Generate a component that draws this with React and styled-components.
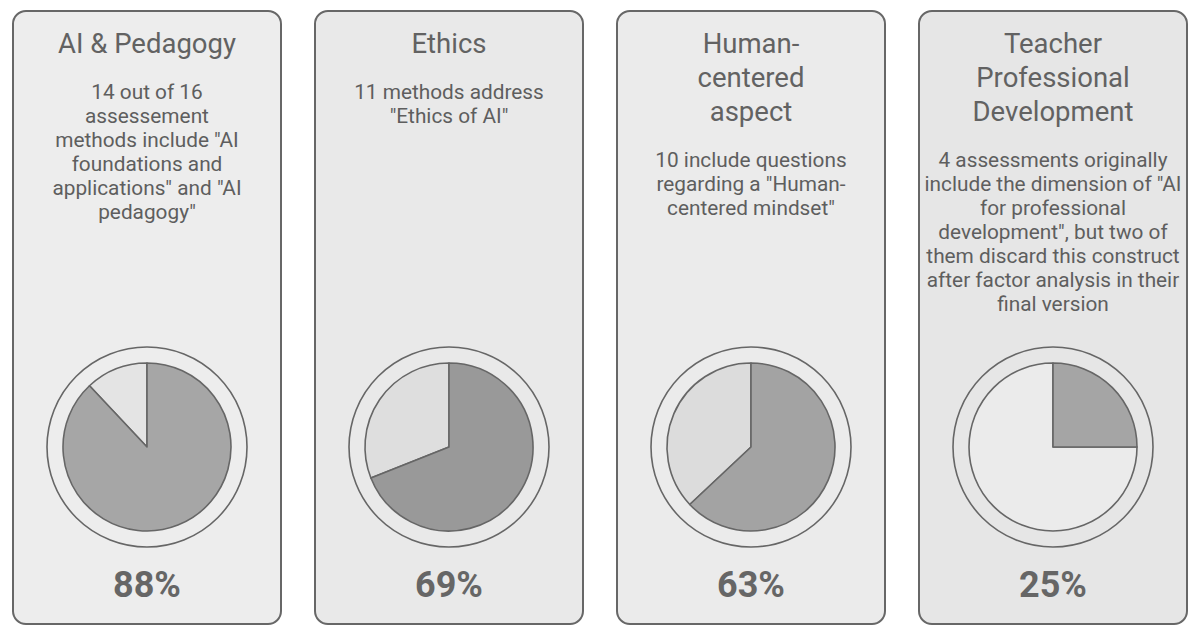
import React from "react";
import styled, { createGlobalStyle } from "styled-components";

const GlobalStyle = createGlobalStyle`
  html, body {
    margin: 0;
    padding: 0;
    background: #ffffff;
  }
  body {
    font-family: Roboto, "Liberation Sans", Arial, sans-serif;
    color: #606060;
  }
`;

const Row = styled.div`
  display: flex;
  gap: 32px;
  padding: 10px 12px 11px;
`;

const Card = styled.div`
  box-sizing: border-box;
  width: 270px;
  height: 615px;
  display: flex;
  flex-direction: column;
  align-items: center;
  padding: 15px 1px 18px;
  border: 2px solid #676767;
  border-radius: 14px;
  background-color: ${(props) => props.bg};
  text-align: center;
`;

const Title = styled.h2`
  margin: 0;
  font-size: 27.5px;
  line-height: 34px;
  font-weight: 400;
  color: #626262;
  white-space: pre-line;
`;

const Body = styled.p`
  margin: 19px 0 0;
  font-size: 20.8px;
  line-height: 24px;
  font-weight: 400;
  color: #5e5e5e;
  white-space: pre-line;
`;

const Chart = styled.div`
  margin-top: auto;
  display: flex;
  flex-direction: column;
  align-items: center;
  gap: 16px;
`;

const Percent = styled.div`
  font-size: 36px;
  line-height: 40px;
  font-weight: 700;
  color: #666666;
`;

const slicePath = (c, r, from, to) => {
  const a0 = (from * 2 - 0.5) * Math.PI;
  const a1 = (to * 2 - 0.5) * Math.PI;
  const x0 = c + r * Math.cos(a0);
  const y0 = c + r * Math.sin(a0);
  const x1 = c + r * Math.cos(a1);
  const y1 = c + r * Math.sin(a1);
  const large = to - from > 0.5 ? 1 : 0;
  return `M ${c} ${c} L ${x0} ${y0} A ${r} ${r} 0 ${large} 1 ${x1} ${y1} Z`;
};

const Pie = ({ value, dark, light }) => {
  const c = 102;
  const r = 84;
  return (
    <svg width="204" height="204" viewBox="0 0 204 204">
      <circle cx={c} cy={c} r="100" fill="none" stroke="#666" strokeWidth="1.6" />
      <path d={slicePath(c, r, value, 1)} fill={light} stroke="#666" strokeWidth="1.6" strokeLinejoin="round" />
      <path d={slicePath(c, r, 0, value)} fill={dark} stroke="#666" strokeWidth="1.6" strokeLinejoin="round" />
    </svg>
  );
};

const cards = [
  {
    title: "AI & Pedagogy",
    text: '14 out of 16\nassessement\nmethods include "AI\nfoundations and\napplications" and "AI\npedagogy"',
    value: 0.88,
    bg: "#ededed",
    dark: "#a6a6a6",
    light: "#e4e4e4"
  },
  {
    title: "Ethics",
    text: '11 methods address\n"Ethics of AI"',
    value: 0.69,
    bg: "#e9e9e9",
    dark: "#999999",
    light: "#dedede"
  },
  {
    title: "Human-\ncentered\naspect",
    text: '10 include questions\nregarding a "Human-\ncentered mindset"',
    value: 0.63,
    bg: "#ebebeb",
    dark: "#a3a3a3",
    light: "#dcdcdc"
  },
  {
    title: "Teacher\nProfessional\nDevelopment",
    text: '4 assessments originally\ninclude the dimension of "AI\nfor professional\ndevelopment", but two of\nthem discard this construct\nafter factor analysis in their\nfinal version',
    value: 0.25,
    bg: "#e6e6e6",
    dark: "#a5a5a5",
    light: "#ebebeb"
  }
];

const App = () => {
  return (
    <>
      <GlobalStyle />
      <Row>
        {cards.map((card) => (
          <Card key={card.title} bg={card.bg}>
            <Title>{card.title}</Title>
            <Body>{card.text}</Body>
            <Chart>
              <Pie value={card.value} dark={card.dark} light={card.light} />
              <Percent>{Math.round(card.value * 100)}%</Percent>
            </Chart>
          </Card>
        ))}
      </Row>
    </>
  );
};

export default App;
